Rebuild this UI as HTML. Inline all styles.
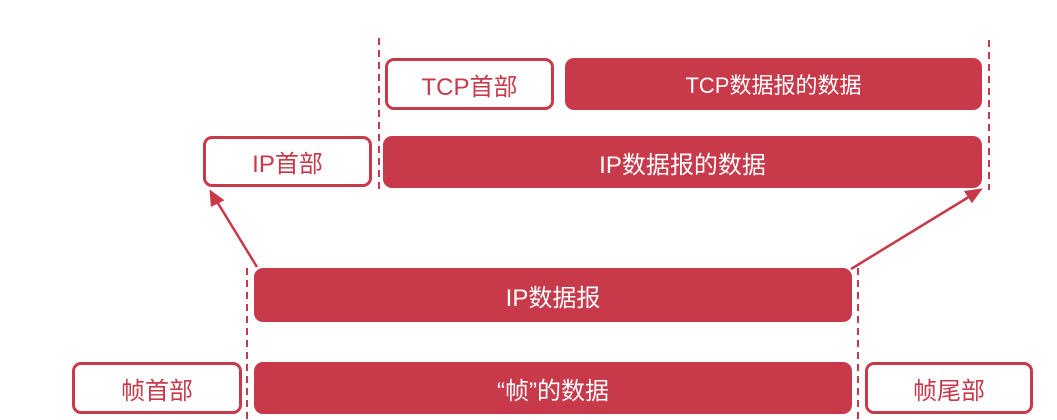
<!DOCTYPE html><html><head><meta charset="utf-8"><style>
body{margin:0;width:1057px;height:420px;background:#fff;position:relative;overflow:hidden;font-family:"Liberation Sans","Noto Sans CJK SC",sans-serif}
.b{position:absolute;box-sizing:border-box;border-radius:9px;display:flex;align-items:center;justify-content:center;font-size:24px}
.f{background:#c8394a;color:#fff}
.o{border:3px solid #c8394a;color:#c8394a;background:#fff}
</style></head><body>
<svg style="position:absolute;left:0;top:0" width="1057" height="420">
<g stroke="#c8394a" stroke-width="2" stroke-dasharray="7,5" fill="none">
<line x1="379" y1="38" x2="379" y2="190"/><line x1="989" y1="40" x2="989" y2="190"/>
<line x1="247" y1="268" x2="247" y2="420"/><line x1="858" y1="268" x2="858" y2="420"/>
</g>
<g stroke="#c8394a" stroke-width="2.5" fill="#c8394a">
<line x1="257" y1="267" x2="216" y2="200"/><path d="M211,192 L222,200 L212,205 Z"/>
<line x1="851" y1="269" x2="972" y2="195"/><path d="M980,190 L972,201 L966,192 Z"/>
</g></svg>
<div class="b o" style="left:385px;top:58px;width:169px;height:52px">TCP首部</div>
<div class="b f" style="left:565px;top:58px;width:417px;height:52px;font-size:22px">TCP数据报的数据</div>
<div class="b o" style="left:203px;top:136px;width:169px;height:51px">IP首部</div>
<div class="b f" style="left:383px;top:136px;width:599px;height:52px">IP数据报的数据</div>
<div class="b f" style="left:254px;top:268px;width:598px;height:54px">IP数据报</div>
<div class="b o" style="left:72px;top:362px;width:170px;height:52px">帧首部</div>
<div class="b f" style="left:254px;top:362px;width:598px;height:52px">“帧”的数据</div>
<div class="b o" style="left:865px;top:362px;width:168px;height:52px">帧尾部</div>
</body></html>
